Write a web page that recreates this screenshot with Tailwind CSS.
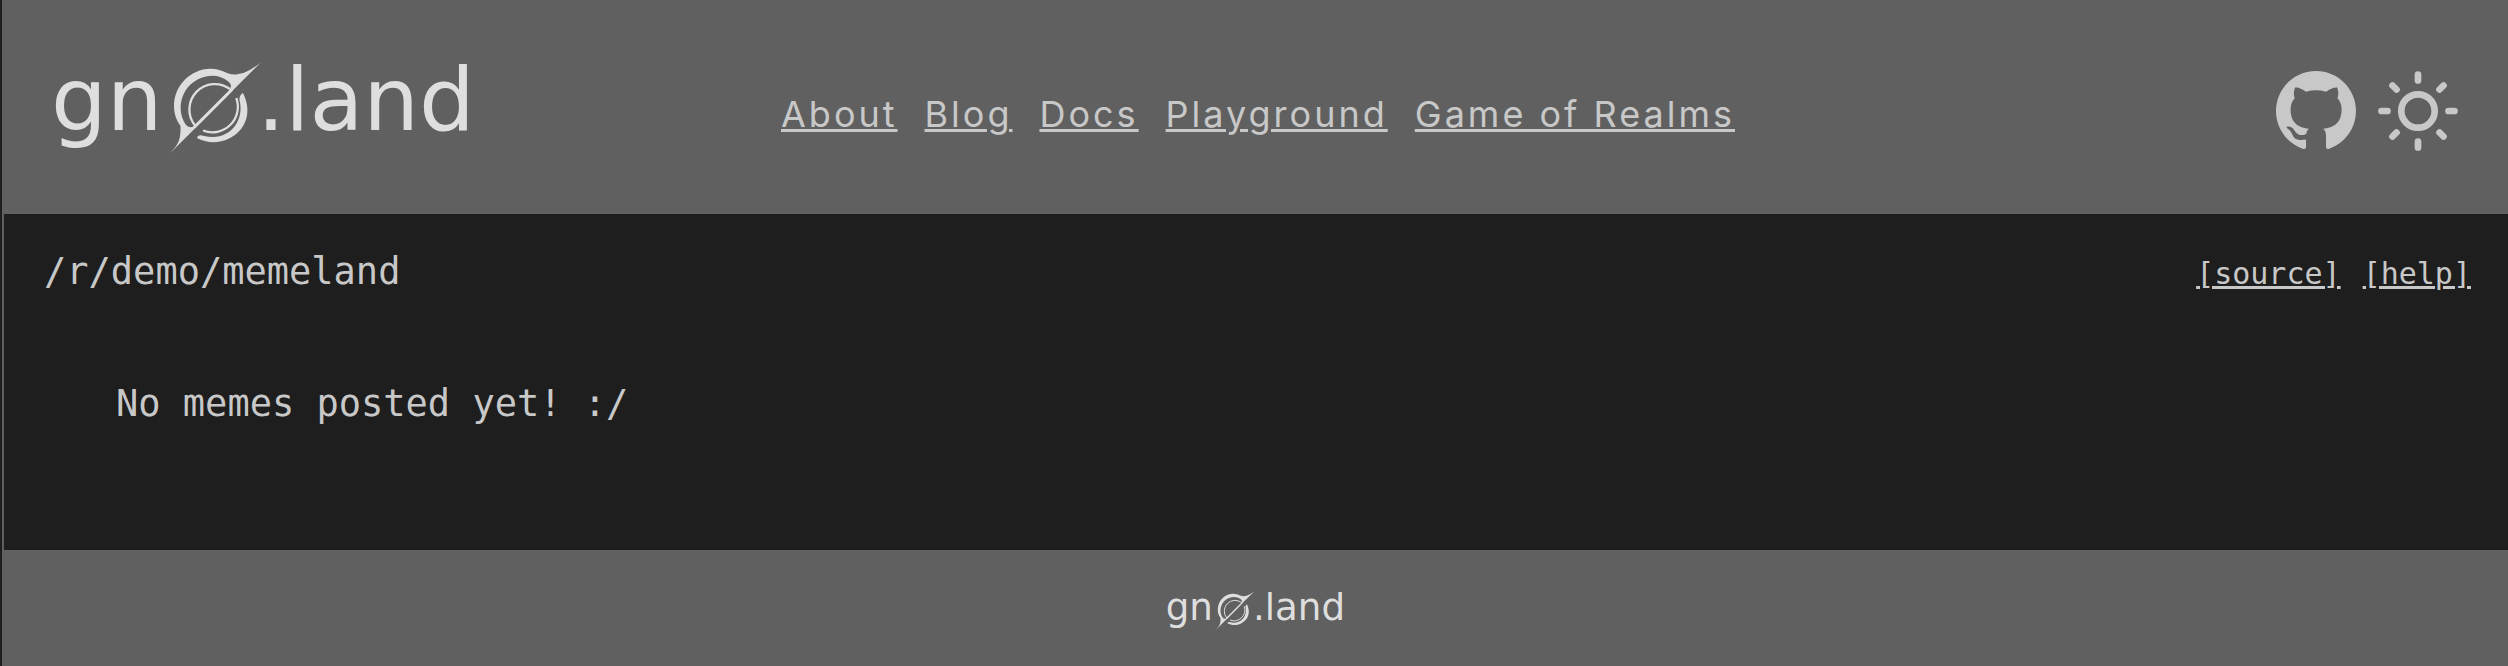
<!DOCTYPE html>
<html lang="en">
<head>
<meta charset="utf-8">
<meta name="viewport" content="width=device-width, initial-scale=1">
<title>gno.land - /r/demo/memeland</title>
<script src="https://cdn.jsdelivr.net/npm/@tailwindcss/browser@4"></script>
</head>
<body class="flex min-h-screen flex-col border-l-2 border-[#1e1e1e] bg-[#606060] font-['Inter',sans-serif] text-[#c8c8c8]">
  <svg class="hidden" aria-hidden="true">
    <symbol id="logo" viewBox="0 0 416 96">
      <g fill="#dedede" font-family="'DejaVu Sans', sans-serif" font-size="88">
        <text x="-3" y="70">gn</text>
        <text x="203" y="70">.land</text>
      </g>
      <g transform="translate(-2 1)">
        <g fill="#dedede">
          <path fill-rule="evenodd" d="M208.700 1.700C199 9 192 13 184 13.500C174 14 172 8 158.500 7.700C138 8 122 25 122 45C122 54 125 60 128.500 65C129 80 126 84 115.300 95C146 65 179 31 208.700 1.700ZM144 63.500C140 68 136 66 134 64C124 50 129 30 141 21.500C152 13 167 12.500 176.300 20.500C180 24 179.500 26 176.500 30.500Z"/>
          <path d="M191 32C201 52 193 70 177 77.500C166 83 154 82 145 77C146 73.500 149 74 152 75C177 81 193 60 187.500 39C187 36 189 33 191 32Z"/>
        </g>
        <g fill="none" stroke="#dedede" stroke-width="2.300">
          <path d="M143 64.500A25.500 25.500 0 0 1 178 28"/>
          <path d="M184.300 37A25.500 25.500 0 0 1 151 69.500"/>
          <path d="M142 66.500L180 28.500" stroke-width="3"/>
        </g>
      </g>
    </symbol>
  </svg>

  <header class="grid grid-cols-[1fr_auto_1fr] items-center pt-[60px] pr-[42px] pb-[58px] pl-[52px]">
    <a href="#" aria-label="gno.land" class="justify-self-start"><svg class="h-24 w-[416px]"><use href="#logo"/></svg></a>
    <nav class="mr-1 flex gap-[27px] pt-3 text-[36px] leading-[44px] tracking-[3px]">
      <a href="#" class="underline decoration-[3px]">About</a>
      <a href="#" class="underline decoration-[3px]">Blog</a>
      <a href="#" class="underline decoration-[3px]">Docs</a>
      <a href="#" class="underline decoration-[3px]">Playground</a>
      <a href="#" class="underline decoration-[3px]">Game of Realms</a>
    </nav>
    <div class="-my-2 flex items-center gap-[14px] justify-self-end pt-[6px]">
      <a href="#" aria-label="GitHub"><svg class="size-20" viewBox="0 0 16 16" fill="currentColor"><path d="M8 0C3.580 0 0 3.580 0 8c0 3.540 2.290 6.530 5.470 7.590.4.070.55-.17.55-.38 0-.19-.01-.82-.01-1.490-2.010.37-2.530-.49-2.690-.94-.09-.23-.48-.94-.82-1.130-.28-.15-.68-.52-.01-.53.63-.01 1.080.58 1.230.82.72 1.210 1.870.87 2.330.66.07-.52.28-.87.51-1.070-1.780-.2-3.640-.89-3.640-3.950 0-.87.31-1.590.82-2.150-.08-.2-.36-1.020.08-2.120 0 0 .67-.21 2.200.82.64-.18 1.320-.27 2-.27s1.360.09 2 .27c1.530-1.040 2.200-.82 2.200-.82.44 1.100.16 1.920.08 2.120.51.56.82 1.270.82 2.150 0 3.070-1.870 3.750-3.650 3.950.29.25.54.73.54 1.480 0 1.070-.01 1.930-.01 2.200 0 .21.15.46.55.38A8 8 0 0 0 16 8c0-4.420-3.580-8-8-8z"/></svg></a>
      <button type="button" aria-label="Toggle theme"><svg class="size-24" viewBox="0 0 96 96" fill="none" stroke="currentColor" stroke-width="6.700" stroke-linecap="round"><circle cx="48" cy="48" r="16.700"/><path d="M48 11.500v6M48 78.500v6M11.500 48h6M78.500 48h6M22.500 22.500l4 4M69.500 69.500l4 4M22.500 73.500l4-4M69.500 26.500l4-4"/></svg></button>
    </div>
  </header>

  <main class="ml-[2px] min-h-[336px] bg-[#1e1e1e] pt-8 pr-[37px] pb-20 pl-10 font-['DejaVu_Sans_Mono',monospace]">
    <div class="flex items-center justify-between">
      <h1 class="text-[37px] leading-[52px]">/r/demo/memeland</h1>
      <div class="flex gap-[22px] pt-1 text-[30px] leading-[48px]">
        <a href="#" class="underline decoration-[3px]">[source]</a>
        <a href="#" class="underline decoration-[3px]">[help]</a>
      </div>
    </div>
    <p class="px-[72px] pt-[82px] text-[37px] leading-[48px]">No memes posted yet! :/</p>
  </main>

  <footer class="flex justify-center pt-10">
    <a href="#" aria-label="gno.land"><svg class="h-[41px] w-[176px]"><use href="#logo"/></svg></a>
  </footer>
</body>
</html>
